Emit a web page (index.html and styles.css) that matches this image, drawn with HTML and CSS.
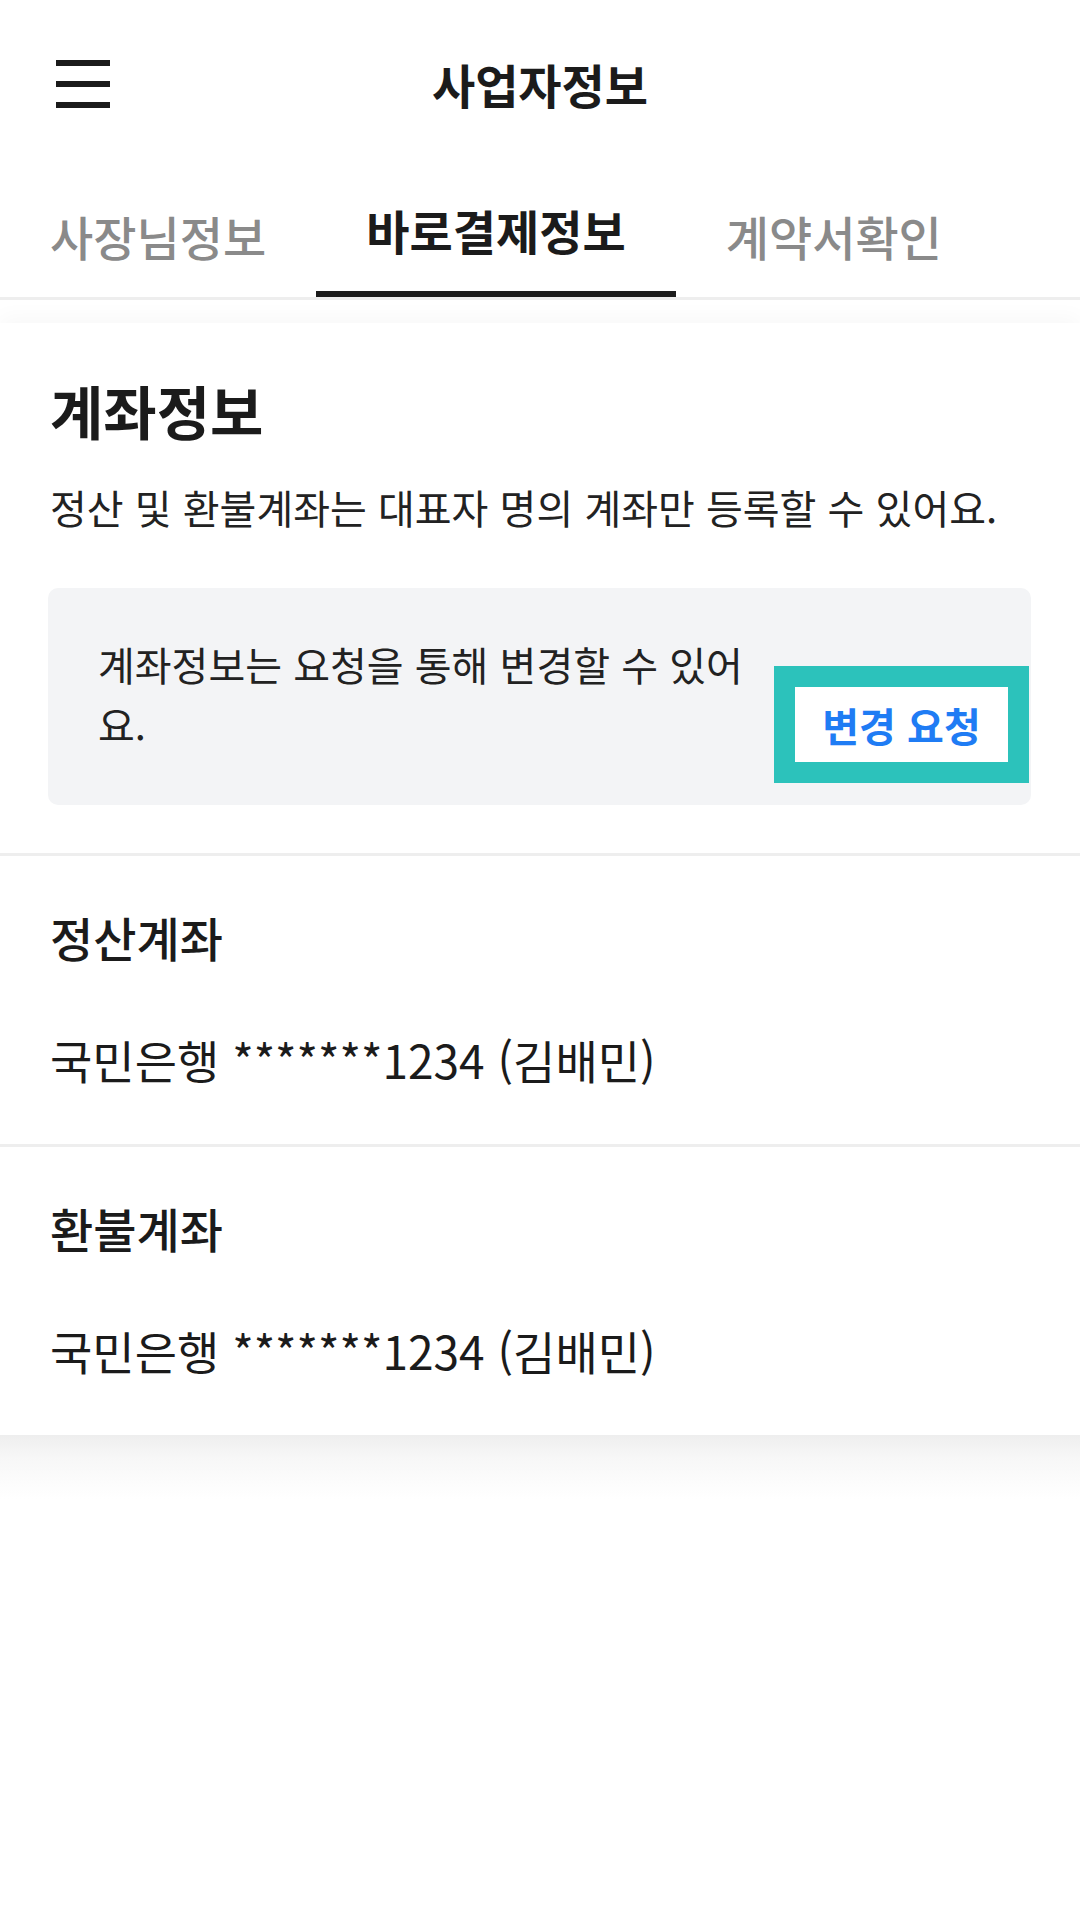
FILE: index.html
```html
<!DOCTYPE html>
<html lang="ko">
<head>
    <meta charset="UTF-8">
    <meta name="viewport" content="width=device-width, initial-scale=1.0">
    <title>사업자정보</title>
    <link rel="stylesheet" href="styles.css">
</head>
<body>

    <header class="top-bar">
        <button class="menu-button" aria-label="메뉴">
            <span></span><span></span><span></span>
        </button>
        <h1 class="top-title">사업자정보</h1>
        <div></div>
    </header>

    <nav class="tabs">
        <a class="tab">사장님정보</a>
        <a class="tab active">바로결제정보</a>
        <a class="tab">계약서확인</a>
    </nav>

    <main class="card">
        <section class="intro">
            <h2 class="card-title">계좌정보</h2>
            <p class="card-desc">정산 및 환불계좌는 대표자 명의 계좌만 등록할 수 있어요.</p>

            <div class="notice">
                <p class="notice-text">계좌정보는 요청을 통해 변경할 수 있어요.</p>
                <button class="change-button">변경 요청</button>
            </div>
        </section>

        <section class="account">
            <h3 class="account-label">정산계좌</h3>
            <p class="account-value">국민은행 *******1234 (김배민)</p>
        </section>

        <section class="account">
            <h3 class="account-label">환불계좌</h3>
            <p class="account-value">국민은행 *******1234 (김배민)</p>
        </section>
    </main>
    <div class="card-shade"></div>

</body>
</html>
```

FILE: styles.css
```css
:root {
    --text-color: #1b1b1b;
    --muted-color: #8a8a8a;
    --line-color: #eeeeee;
    --notice-background: #f3f4f6;
    --link-color: #1f7cf4;
    --highlight-color: #2cc2bb;
}

/* General Body Styles */
body {
    margin: 0;
    font-family: 'Noto Sans CJK KR', 'Noto Sans', sans-serif;
    color: var(--text-color);
    background: #ffffff;
}

h1, h2, h3, p {
    margin: 0;
}

/* Top Bar */
.top-bar {
    height: 168px;
    display: grid;
    grid-template-columns: 1fr auto 1fr;
    align-items: center;
    padding: 0 56px;
}

.menu-button {
    width: 54px;
    height: 48px;
    padding: 0;
    border: none;
    background: none;
    display: flex;
    flex-direction: column;
    justify-content: space-between;
}

.menu-button span {
    display: block;
    height: 6px;
    background: var(--text-color);
}

.top-title {
    font-size: 47px;
    font-weight: 700;
    line-height: 60px;
}

/* Tabs */
.tabs {
    display: flex;
    border-bottom: 3px solid var(--line-color);
}

.tab {
    padding: 38px 50px 25px;
    font-size: 47px;
    line-height: 60px;
    font-weight: 500;
    color: var(--muted-color);
    border-bottom: 6px solid transparent;
}

.tab.active {
    padding-top: 32px;
    padding-bottom: 31px;
    color: var(--text-color);
    font-weight: 700;
    border-bottom-color: var(--text-color);
}

/* Card */
.card {
    margin-top: 23px;
    background: #ffffff;
    box-shadow: 0 -6px 20px rgba(0, 0, 0, 0.03);
}

.card-shade {
    height: 64px;
    background: linear-gradient(to bottom, #eeeeee 0%, #f7f7f7 35%, #ffffff 100%);
}

.intro {
    padding: 52px 49px 48px 50px;
    border-bottom: 3px solid var(--line-color);
}

.card-title {
    font-size: 58px;
    line-height: 70px;
    font-weight: 700;
}

.card-desc {
    margin-top: 34px;
    font-size: 40px;
    line-height: 56px;
    color: #222222;
}

/* Notice Box */
.notice {
    margin: 53px 0 0 -2px;
    padding: 46px 2px 22px 50px;
    background: var(--notice-background);
    border-radius: 10px;
    display: flex;
    align-items: flex-start;
}

.notice-text {
    flex: 1;
    font-size: 40px;
    line-height: 60px;
    color: #222222;
    padding-right: 20px;
}

.change-button {
    flex-shrink: 0;
    margin-top: 32px;
    width: 255px;
    height: 117px;
    border: 21px solid var(--highlight-color);
    background: #ffffff;
    color: var(--link-color);
    font-family: inherit;
    font-size: 40px;
    font-weight: 700;
    padding: 0;
}

/* Account Rows */
.account {
    padding: 51px 50px 55px;
}

.account + .account {
    border-top: 3px solid var(--line-color);
}

.account-label {
    font-size: 47px;
    line-height: 60px;
    font-weight: 500;
}

.account-value {
    margin-top: 62px;
    font-size: 46px;
    line-height: 60px;
}
```
